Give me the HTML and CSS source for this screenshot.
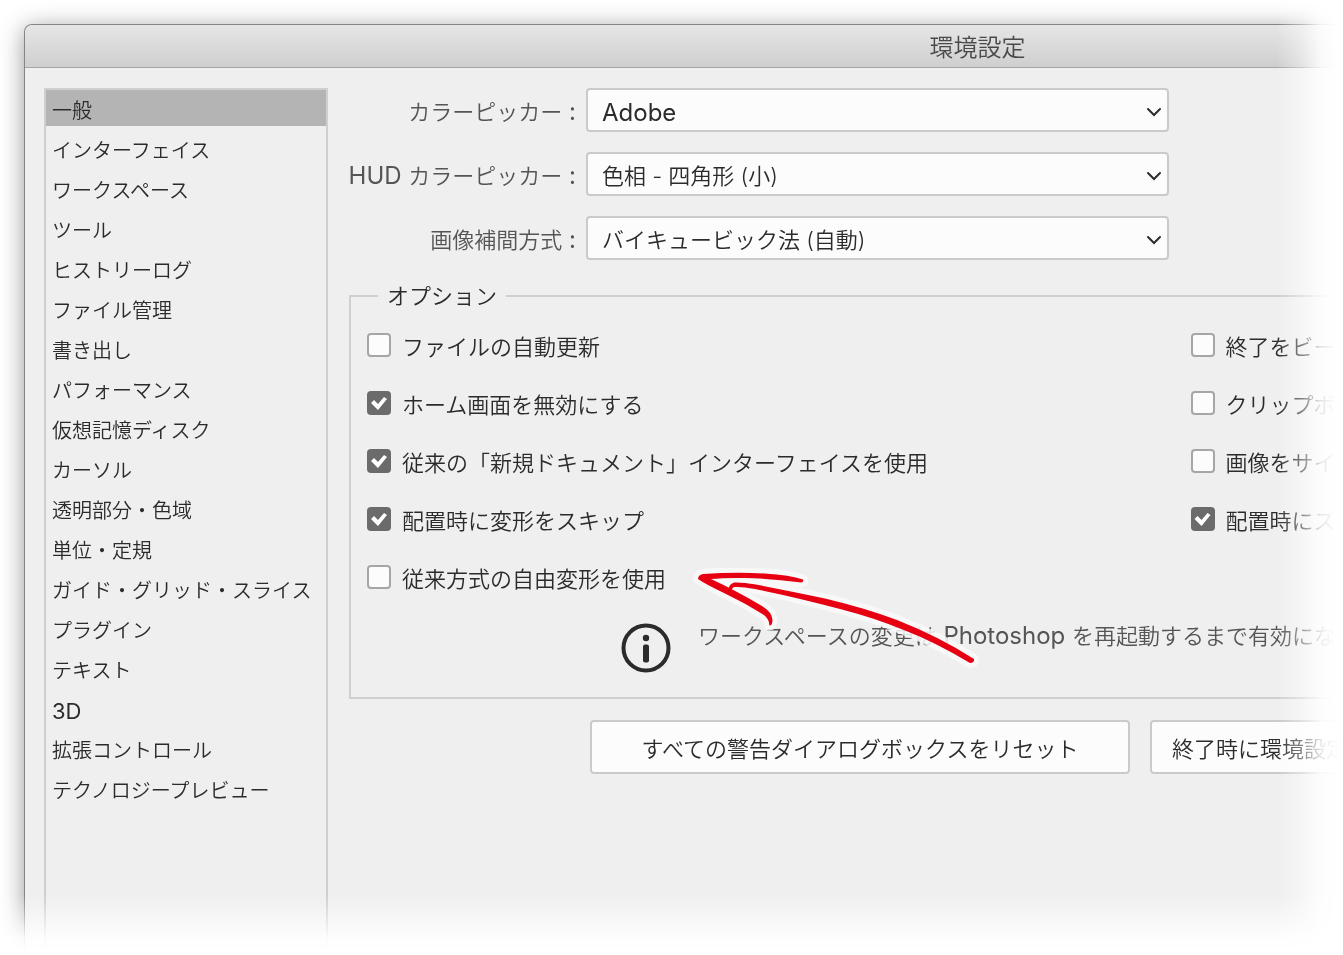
FILE: index.html
```html
<!DOCTYPE html>
<html lang="ja">
<head>
<meta charset="utf-8">
<title>環境設定</title>
<link rel="stylesheet" href="styles.css">
</head>
<body>
<div class="stage">
  <div class="window">
    <header class="titlebar"><h1 class="title">環境設定</h1></header>
    <div class="content">
      <nav class="sidebar">
        <ul class="menu">
          <li><a class="item selected" href="#">一般</a></li>
          <li><a class="item" href="#">インターフェイス</a></li>
          <li><a class="item" href="#">ワークスペース</a></li>
          <li><a class="item" href="#">ツール</a></li>
          <li><a class="item" href="#">ヒストリーログ</a></li>
          <li><a class="item" href="#">ファイル管理</a></li>
          <li><a class="item" href="#">書き出し</a></li>
          <li><a class="item" href="#">パフォーマンス</a></li>
          <li><a class="item" href="#">仮想記憶ディスク</a></li>
          <li><a class="item" href="#">カーソル</a></li>
          <li><a class="item" href="#">透明部分・色域</a></li>
          <li><a class="item" href="#">単位・定規</a></li>
          <li><a class="item" href="#">ガイド・グリッド・スライス</a></li>
          <li><a class="item" href="#">プラグイン</a></li>
          <li><a class="item" href="#">テキスト</a></li>
          <li><a class="item item-latin" href="#">3D</a></li>
          <li><a class="item" href="#">拡張コントロール</a></li>
          <li><a class="item" href="#">テクノロジープレビュー</a></li>
        </ul>
      </nav>
      <main class="panel">
        <div class="fields">
          <label class="field-label" for="picker">カラーピッカー<span class="latin"> :</span></label>
          <div class="select-box">
            <select class="select select-latin" id="picker"><option>Adobe</option></select>
            <svg class="chevron" viewBox="0 0 16 10"><path d="M2 2l6 6 6-6"/></svg>
          </div>
          <label class="field-label" for="hud"><span class="latin">HUD </span>カラーピッカー<span class="latin"> :</span></label>
          <div class="select-box">
            <select class="select" id="hud"><option>色相 - 四角形 (小)</option></select>
            <svg class="chevron" viewBox="0 0 16 10"><path d="M2 2l6 6 6-6"/></svg>
          </div>
          <label class="field-label" for="interp">画像補間方式<span class="latin"> :</span></label>
          <div class="select-box">
            <select class="select" id="interp"><option>バイキュービック法 (自動)</option></select>
            <svg class="chevron" viewBox="0 0 16 10"><path d="M2 2l6 6 6-6"/></svg>
          </div>
        </div>
        <fieldset class="options">
          <legend class="legend">オプション</legend>
          <div class="columns">
            <div class="checks">
              <label class="check"><input class="box" type="checkbox"><span class="check-text">ファイルの自動更新</span></label>
              <label class="check"><input class="box" type="checkbox" checked><span class="check-text">ホーム画面を無効にする</span></label>
              <label class="check"><input class="box" type="checkbox" checked><span class="check-text">従来の「新規ドキュメント」インターフェイスを使用</span></label>
              <label class="check"><input class="box" type="checkbox" checked><span class="check-text">配置時に変形をスキップ</span></label>
              <label class="check"><input class="box" type="checkbox"><span class="check-text">従来方式の自由変形を使用</span></label>
            </div>
            <div class="checks">
              <label class="check"><input class="box" type="checkbox"><span class="check-text">終了をビー</span></label>
              <label class="check"><input class="box" type="checkbox"><span class="check-text">クリップボ</span></label>
              <label class="check"><input class="box" type="checkbox"><span class="check-text">画像をサイ</span></label>
              <label class="check"><input class="box" type="checkbox" checked><span class="check-text">配置時にス</span></label>
            </div>
          </div>
          <div class="notice">
            <svg class="info" viewBox="0 0 50 50">
              <circle class="ring" cx="25" cy="25" r="22.5"/>
              <circle cx="25" cy="15" r="3.2"/>
              <rect x="22" y="21.5" width="6" height="18" rx="2"/>
            </svg>
            <p class="notice-text">ワークスペースの変更は<span class="latin"> Photoshop </span>を再起動するまで有効にな</p>
          </div>
        </fieldset>
        <div class="actions">
          <button class="button reset" type="button">すべての警告ダイアログボックスをリセット</button>
          <button class="button" type="button">終了時に環境設定</button>
        </div>
      </main>
    </div>
    <svg class="arrow" viewBox="690 565 290 105">
      <defs>
        <g id="arrow-shape">
          <path d="M698 579Q698 575 703 574Q735 572 765 573.5Q790 575 803 579.5Q804 582 801 582.5Q770 578.5 745 578Q725 577.5 711 579Q735 590 762 606Q772 612 772.5 620Q772.5 625.5 769.5 625.5Q769 619 764 615Q745 603 725 593.5Q705 584 698 579Z"/>
          <path d="M729 590Q728 585 734 582.5Q742 582 756 584.5Q790 591 825 598.5Q865 608 897 620Q940 637 974 659Q974.500 663 970 663Q935 642 905 630.5Q875 618 840 609Q795 597 755 589Q742 586.500 735 587Q732 587 731.5 591Z"/>
        </g>
      </defs>
      <use class="halo" href="#arrow-shape"/>
      <use class="red" href="#arrow-shape"/>
    </svg>
  </div>
</div>
</body>
</html>
```
FILE: styles.css
```css
* { box-sizing: border-box; }
body {
  margin: 0;
  overflow: hidden;
  background: #fff;
  color: #2b2b2b;
  font: 350 22px/32px Inter, "Noto Sans CJK JP", sans-serif;
}
.stage {
  display: flex;
  height: 100vh;
  padding: 24px 0 0 24px;
  overflow: hidden;
  -webkit-mask-image: linear-gradient(to right, #000 calc(100% - 66px), rgba(0,0,0,.6) calc(100% - 42px), rgba(0,0,0,.12) calc(100% - 22px), transparent calc(100% - 5px)), linear-gradient(to bottom, #000 calc(100% - 60px), rgba(0,0,0,.6) calc(100% - 40px), rgba(0,0,0,.12) calc(100% - 18px), transparent calc(100% - 4px));
  -webkit-mask-composite: source-in;
  mask-composite: intersect;
}
.window {
  position: relative;
  display: flex;
  flex-direction: column;
  flex: none;
  width: 142vw;
  border: 1px solid #858585;
  border-bottom: 0;
  border-radius: 8px 8px 0 0;
  background: #efefef;
  box-shadow: 0 4px 24px rgba(0, 0, 0, .4);
}
.titlebar {
  height: 43px;
  border-bottom: 1px solid #a6a6a6;
  border-radius: 8px 8px 0 0;
  background: linear-gradient(#e6e6e6, #cfcfcf);
}
.title {
  margin: 0;
  color: #4a4a4a;
  font-size: 24px;
  font-weight: 350;
  line-height: 46px;
  text-align: center;
}
.content {
  display: flex;
  flex: 1;
  gap: 20px;
  padding: 20px 20px 0 19px;
}
.sidebar {
  flex: none;
  width: 284px;
  border: 2px solid #cfcfcf;
  border-bottom: 0;
}
.menu { margin: 0; padding: 0; list-style: none; }
.item {
  display: block;
  height: 40px;
  padding-left: 6px;
  color: #2b2b2b;
  font-size: 20px;
  line-height: 42px;
  white-space: nowrap;
  text-decoration: none;
}
.item-latin { font-size: 22px; font-weight: 400; }
.selected { background: linear-gradient(#b4b4b4, #b4b4b4) 0 0 / 100% 36px no-repeat; }
.latin {
  font-size: 24px;
  font-weight: 400;
  line-height: 24px;
}
.panel { flex: 1; min-width: 0; }
.fields {
  display: grid;
  grid-template-columns: 228px 583px;
  gap: 20px 10px;
  align-items: center;
}
.field-label {
  padding-top: 3px;
  color: #555;
  text-align: right;
  white-space: nowrap;
}
.select-box { position: relative; }
.select {
  display: block;
  width: 100%;
  height: 44px;
  padding: 4px 40px 0 14px;
  border: 2px solid #cacaca;
  border-radius: 4px;
  background: #fcfcfc;
  color: #2b2b2b;
  font-family: inherit;
  font-size: 22px;
  font-weight: 350;
  appearance: none;
}
.select-latin { font-size: 24px; font-weight: 400; }
.chevron {
  position: absolute;
  right: 7px;
  top: 19px;
  width: 16px;
  height: 10px;
  fill: none;
  stroke: #2b2b2b;
  stroke-width: 2;
  stroke-linecap: round;
  pointer-events: none;
}
.options {
  min-width: 0;
  margin: 20px 0 0 1px;
  padding: 15px 16px 24px;
  border: 2px solid #cfcfcf;
}
.legend { margin-left: 11px; padding: 0 9px; }
.columns { display: grid; grid-template-columns: 54% 1fr; }
.checks {
  display: flex;
  flex-direction: column;
  gap: 22px;
}
.check {
  display: flex;
  gap: 11px;
  align-items: center;
  white-space: nowrap;
}
.check-text { padding-top: 4px; }
.box {
  flex: none;
  width: 24px;
  height: 24px;
  margin: 0;
  border: 2px solid #a6a6a6;
  border-radius: 4px;
  background: #fcfcfc;
  appearance: none;
}
.box:checked { border: 0; background: #6b6b6b; }
.box:checked::before {
  content: "";
  display: block;
  width: 24px;
  height: 24px;
  background: #fff;
  clip-path: polygon(4px 12px, 7px 9px, 11px 13px, 17px 6px, 20px 8px, 11px 19px);
}
.notice {
  display: flex;
  gap: 27px;
  align-items: flex-start;
  padding: 28px 0 0 254px;
}
.info { flex: none; width: 50px; height: 50px; fill: #2b2b2b; }
.ring { fill: none; stroke: #2b2b2b; stroke-width: 4; }
.notice-text {
  margin: 0;
  color: #555;
  line-height: 26px;
  white-space: nowrap;
}
.actions {
  display: flex;
  gap: 20px;
  padding: 21px 0 0 242px;
}
.button {
  height: 54px;
  padding: 0 20px;
  border: 2px solid #cacaca;
  border-radius: 4px;
  background: #fcfcfc;
  color: #2b2b2b;
  font-family: inherit;
  font-size: 22px;
  font-weight: 350;
  white-space: nowrap;
}
.reset { min-width: 540px; }
.arrow {
  position: absolute;
  left: 665px;
  top: 540px;
  width: 290px;
  height: 105px;
  overflow: visible;
  pointer-events: none;
}
.halo {
  fill: #fafafa;
  stroke: #fafafa;
  stroke-width: 10;
  stroke-linejoin: round;
  opacity: .85;
}
.red { fill: #e60012; }
```
